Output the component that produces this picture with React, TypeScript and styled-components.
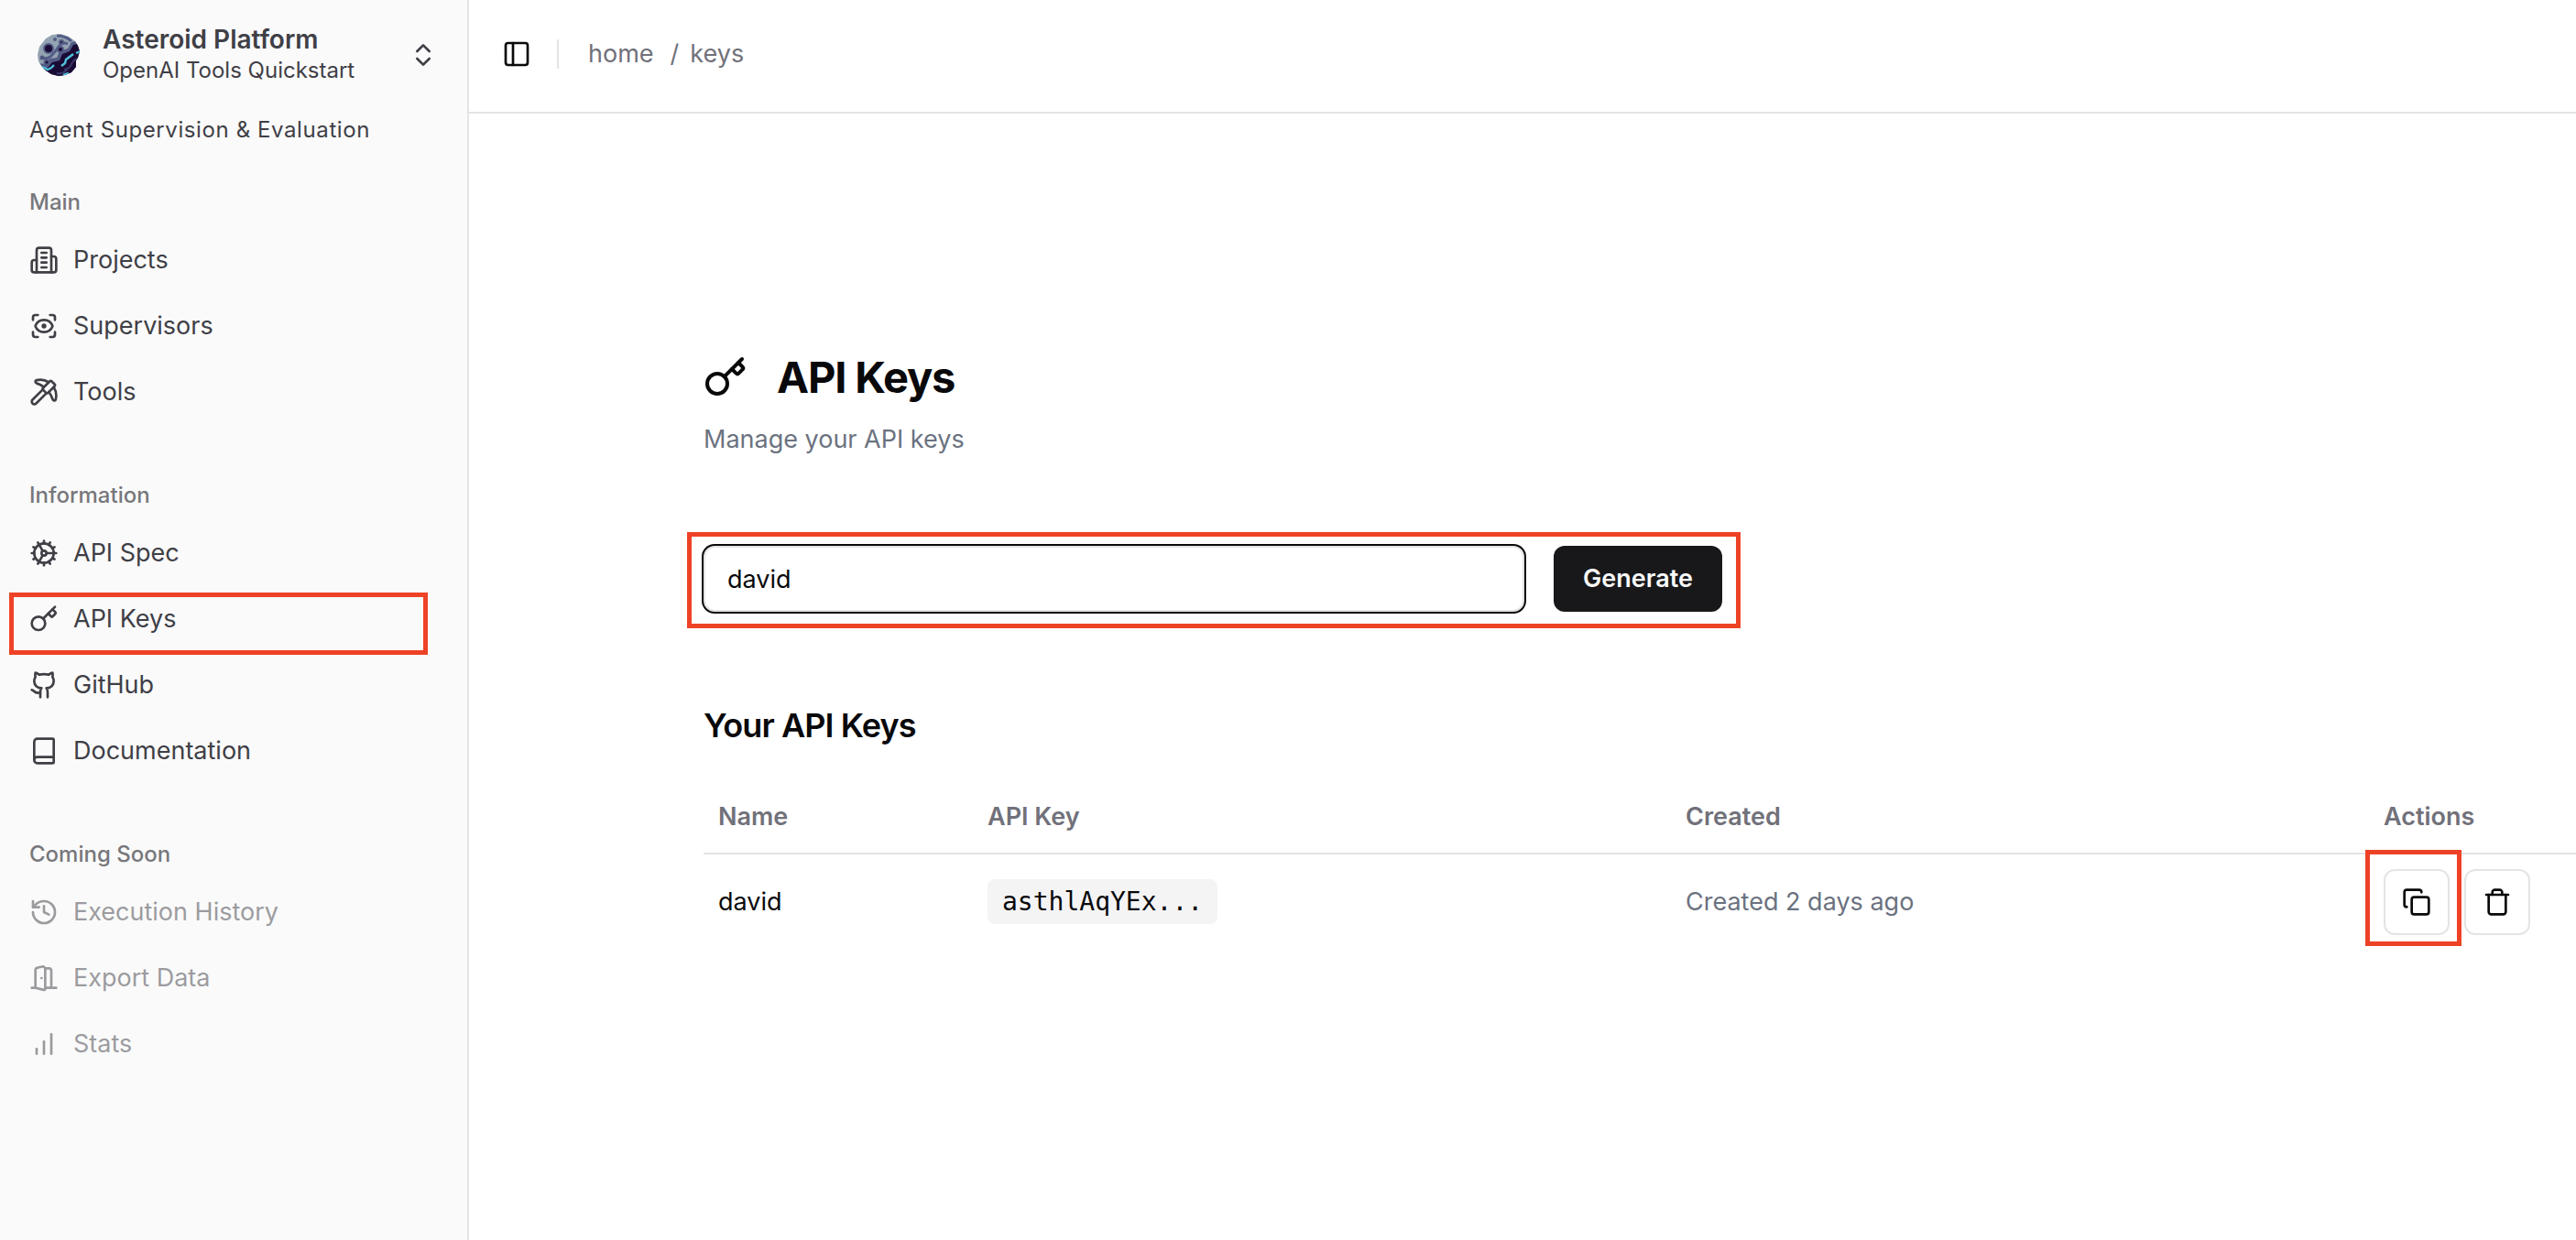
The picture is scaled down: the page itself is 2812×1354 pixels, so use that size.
import React, { useState } from "react";
import styled, { createGlobalStyle, css } from "styled-components";
import {
  Book,
  ChevronsUpDown,
  Cog,
  Copy,
  Github,
  History,
  Key,
  PanelLeft,
  Pickaxe,
  ScanEye,
} from "lucide-react";

const GlobalStyle = createGlobalStyle`
  *, *::before, *::after { box-sizing: border-box; }
  body {
    margin: 0;
    background: #ffffff;
    color: #09090b;
    font-family: Inter, "Liberation Sans", sans-serif;
    font-size: 27px;
    line-height: 40px;
  }
  h1, h2, p, ul { margin: 0; padding: 0; }
  button, input { font: inherit; color: inherit; }
`;

const Shell = styled.div`
  display: flex;
  min-height: 100vh;
  overflow: hidden;
`;

/* Red outline drawn over the control that a reader should look at. */
const highlight = css<{ $inset: string }>`
  position: relative;
  &::after {
    content: "";
    position: absolute;
    inset: ${(p) => p.$inset};
    border: 5px solid #ee4226;
    pointer-events: none;
  }
`;

const Sidebar = styled.aside`
  flex: 0 0 512px;
  display: flex;
  flex-direction: column;
  background: #fafafa;
  border-right: 2px solid #e4e4e7;
  color: #3f3f46;
`;

const SidebarHeader = styled.header`
  padding: 16px 16px 10px;
`;

const TeamButton = styled.button`
  display: flex;
  align-items: center;
  gap: 24px;
  width: 100%;
  height: 88px;
  padding: 0 16px 0 24px;
  border: 0;
  background: none;
  text-align: left;
  svg:last-child { margin-left: auto; }
`;

const TeamText = styled.span`
  display: flex;
  flex-direction: column;
  padding-bottom: 2px;
`;

const TeamName = styled.span`
  font-size: 28px;
  font-weight: 600;
  line-height: 36px;
`;

const TeamProject = styled.span`
  font-size: 24px;
  line-height: 32px;
`;

const Tagline = styled.p`
  padding: 0 16px;
  margin-top: 18px;
  font-size: 24px;
  letter-spacing: 0.025em;
`;

const Group = styled.nav`
  padding: 16px;
  & + & { margin-top: 16px; }
`;

const GroupLabel = styled.h2`
  display: flex;
  align-items: center;
  height: 64px;
  padding: 2px 16px 0;
  font-size: 24px;
  font-weight: 500;
  color: #77777b;
`;

const Menu = styled.ul`
  display: flex;
  flex-direction: column;
  gap: 8px;
  list-style: none;
`;

const MenuItem = styled.li<{ $marked?: boolean; $inset: string }>`
  ${(p) => p.$marked && highlight}
`;

const MenuLink = styled.a<{ $disabled?: boolean }>`
  display: flex;
  align-items: center;
  gap: 16px;
  height: 64px;
  padding: 0 16px;
  color: inherit;
  text-decoration: none;
  opacity: ${(p) => (p.$disabled ? 0.5 : 1)};
`;

const Main = styled.main`
  flex: 1;
  min-width: 0;
`;

const TopBar = styled.header`
  display: flex;
  align-items: center;
  gap: 16px;
  padding: 31px 24px 35px;
  border-bottom: 2px solid #e4e4e7;
`;

const ToggleButton = styled.button`
  display: grid;
  place-items: center;
  width: 56px;
  height: 56px;
  padding: 0;
  border: 0;
  background: none;
`;

const Divider = styled.span`
  width: 2px;
  height: 32px;
  background: #e4e4e7;
`;

const Crumbs = styled.nav`
  display: flex;
  gap: 12px;
  padding-left: 16px;
  color: #71717a;
  a { color: inherit; text-decoration: none; margin-right: 6px; }
`;

const Content = styled.div`
  padding: 256px 0 64px 256px;
`;

const Title = styled.h1`
  display: flex;
  align-items: center;
  gap: 32px;
  font-size: 47px;
  line-height: 64px;
  font-weight: 700;
  letter-spacing: -0.025em;
`;

const Subtitle = styled.p`
  margin-top: 16px;
  color: #6b7280;
`;

const KeyForm = styled.form`
  ${highlight}
  display: flex;
  gap: 32px;
  width: fit-content;
  margin-top: 96px;
`;

const NameInput = styled.input`
  width: 896px;
  height: 72px;
  padding: 0 24px;
  border: 2px solid #e4e4e7;
  border-radius: 12px;
  background: #ffffff;
  outline: none;
  box-shadow: 0 0 0 2px #09090b;
`;

const GenerateButton = styled.button`
  height: 72px;
  padding: 0 32px;
  border: 0;
  border-radius: 12px;
  background: #18181b;
  color: #fafafa;
  font-weight: 600;
`;

const SectionTitle = styled.h2`
  margin: 96px 0 32px;
  font-size: 36px;
  line-height: 56px;
  font-weight: 600;
  letter-spacing: -0.025em;
`;

const KeyTable = styled.table`
  width: 100%;
  table-layout: fixed;
  border-spacing: 0;
  th, td { padding: 0 16px; text-align: left; }
  th {
    height: 81px;
    border-bottom: 2px solid #e4e4e7;
    font-weight: 600;
    color: #71717a;
  }
  td { height: 104px; }
`;

const NameHead = styled.th`
  width: 294px;
`;

const ActionsHead = styled.th`
  width: 226px;
`;

const KeyCode = styled.code`
  padding: 8px 16px;
  border-radius: 8px;
  background: #f4f4f5;
  font-family: "DejaVu Sans Mono", monospace;
  font-size: 28px;
`;

const CreatedCell = styled.td`
  color: #6b7280;
`;

const Actions = styled.div`
  display: flex;
  gap: 16px;
`;

const ActionSlot = styled.span<{ $marked?: boolean; $inset: string }>`
  display: flex;
  ${(p) => p.$marked && highlight}
`;

const IconButton = styled.button`
  display: grid;
  place-items: center;
  width: 72px;
  height: 72px;
  padding: 0;
  border: 2px solid #e4e4e7;
  border-radius: 12px;
  background: #ffffff;
`;

type IconProps = { size?: number };

function Strokes({ size = 32, paths }: IconProps & { paths: string[] }) {
  return (
    <svg
      width={size}
      height={size}
      viewBox="0 0 24 24"
      fill="none"
      stroke="currentColor"
      strokeWidth={2}
      strokeLinecap="round"
      strokeLinejoin="round"
      aria-hidden="true"
    >
      {paths.map((d) => (
        <path key={d} d={d} />
      ))}
    </svg>
  );
}

const BuildingIcon = (p: IconProps) => (
  <Strokes
    {...p}
    paths={[
      "M6 22V4a2 2 0 0 1 2-2h8a2 2 0 0 1 2 2v18Z",
      "M6 12H4a2 2 0 0 0-2 2v6a2 2 0 0 0 2 2h2",
      "M18 9h2a2 2 0 0 1 2 2v9a2 2 0 0 1-2 2h-2",
      "M10 6h4",
      "M10 10h4",
      "M10 14h4",
      "M10 18h4",
    ]}
  />
);

const DoorIcon = (p: IconProps) => (
  <Strokes
    {...p}
    paths={[
      "M13 4h3a2 2 0 0 1 2 2v14",
      "M2 20h3",
      "M13 20h9",
      "M10 12v.01",
      "M13 4.562v16.157a1 1 0 0 1-1.242.97L5 20V5.562a2 2 0 0 1 1.515-1.94l4-1A2 2 0 0 1 13 4.561Z",
    ]}
  />
);

const BarsIcon = (p: IconProps) => (
  <Strokes {...p} paths={["M12 20V10", "M18 20V4", "M6 20v-4"]} />
);

const TrashIcon = (p: IconProps) => (
  <Strokes
    {...p}
    paths={[
      "M3 6h18",
      "M19 6v14c0 1-1 2-2 2H7c-1 0-2-1-2-2V6",
      "M8 6V4c0-1 1-2 2-2h4c1 0 2 1 2 2v2",
    ]}
  />
);

function AsteroidLogo() {
  return (
    <svg width="48" height="48" viewBox="0 0 48 48" aria-hidden="true">
      <defs>
        <clipPath id="rock">
          <path d="M10 6 17 2 26 1 35 4 42 9 45 14 47 20 45 27 43 30 43 37 38 43 31 46 24 47 16 45 10 41 6 37 2 31 1 24 3 15Z" />
        </clipPath>
      </defs>
      <g clipPath="url(#rock)">
        <rect width="48" height="48" fill="#94a3b1" />
        <path d="M48 8 38 10 34 17 25 20 22 27 14 28 10 34 0 33V48H48Z" fill="#535c86" />
        <path d="M48 11 40 13 36 20 28 23 25 30 17 32 12 38 4 39V48H48Z" fill="#1a0b35" />
        <path d="M22 3q10 0 16 6M4 27q8 2 12-2t8-10 10-3" fill="none" stroke="#535c86" strokeWidth="3" />
        <path d="M30 40q6-1 8-6t7-6M22 44q8 1 12-5" fill="none" stroke="#3b3868" strokeWidth="2" />
        <g fill="#1a0b35" stroke="#535c86" strokeWidth="2">
          <circle cx="13" cy="17" r="5" />
          <circle cx="26" cy="18" r="3" />
          <circle cx="27" cy="10" r="2" />
          <circle cx="20" cy="7" r="1" />
          <circle cx="6" cy="27" r="1.5" />
          <circle cx="11" cy="32" r="2.5" />
        </g>
        <path
          d="M27 36 31 33 32 29 36 26 40 23M43 22 48 20M6 37 12 40 16 38 19 35M29 46 35 44"
          fill="none"
          stroke="#4fc3dc"
          strokeWidth="2.4"
          strokeLinejoin="round"
        />
      </g>
    </svg>
  );
}

type Entry = {
  label: string;
  icon: React.ComponentType<IconProps>;
  marked?: boolean;
  disabled?: boolean;
};

const groups: { title: string; entries: Entry[] }[] = [
  {
    title: "Main",
    entries: [
      { label: "Projects", icon: BuildingIcon },
      { label: "Supervisors", icon: ScanEye },
      { label: "Tools", icon: Pickaxe },
    ],
  },
  {
    title: "Information",
    entries: [
      { label: "API Spec", icon: Cog },
      { label: "API Keys", icon: Key, marked: true },
      { label: "GitHub", icon: Github },
      { label: "Documentation", icon: Book },
    ],
  },
  {
    title: "Coming Soon",
    entries: [
      { label: "Execution History", icon: History, disabled: true },
      { label: "Export Data", icon: DoorIcon, disabled: true },
      { label: "Stats", icon: BarsIcon, disabled: true },
    ],
  },
];

export default function App() {
  const [name, setName] = useState("david");

  return (
    <>
      <GlobalStyle />
      <Shell>
        <Sidebar>
          <SidebarHeader>
            <TeamButton type="button">
              <AsteroidLogo />
              <TeamText>
                <TeamName>Asteroid Platform</TeamName>
                <TeamProject>OpenAI Tools Quickstart</TeamProject>
              </TeamText>
              <ChevronsUpDown size={32} />
            </TeamButton>
            <Tagline>Agent Supervision &amp; Evaluation</Tagline>
          </SidebarHeader>
          {groups.map((group) => (
            <Group key={group.title} aria-label={group.title}>
              <GroupLabel>{group.title}</GroupLabel>
              <Menu>
                {group.entries.map(({ label, icon: Icon, marked, disabled }) => (
                  <MenuItem key={label} $marked={marked} $inset="3px 27px -7px -6px">
                    <MenuLink href="#" $disabled={disabled} aria-disabled={disabled}>
                      <Icon size={32} />
                      {label}
                    </MenuLink>
                  </MenuItem>
                ))}
              </Menu>
            </Group>
          ))}
        </Sidebar>

        <Main>
          <TopBar>
            <ToggleButton type="button" aria-label="Toggle sidebar">
              <PanelLeft size={32} />
            </ToggleButton>
            <Divider />
            <Crumbs aria-label="Breadcrumb">
              <a href="#">home</a>
              <span>/</span>
              <span>keys</span>
            </Crumbs>
          </TopBar>

          <Content>
            <Title>
              <Key size={48} />
              API Keys
            </Title>
            <Subtitle>Manage your API keys</Subtitle>

            <KeyForm $inset="-15px -20px -18px -18px" onSubmit={(e) => e.preventDefault()}>
              <NameInput
                aria-label="Key name"
                value={name}
                onChange={(e) => setName(e.target.value)}
              />
              <GenerateButton type="submit">Generate</GenerateButton>
            </KeyForm>

            <SectionTitle>Your API Keys</SectionTitle>
            <KeyTable>
              <thead>
                <tr>
                  <NameHead scope="col">Name</NameHead>
                  <th scope="col">API Key</th>
                  <th scope="col">Created</th>
                  <ActionsHead scope="col">Actions</ActionsHead>
                </tr>
              </thead>
              <tbody>
                <tr>
                  <td>david</td>
                  <td>
                    <KeyCode>asthlAqYEx...</KeyCode>
                  </td>
                  <CreatedCell>Created 2 days ago</CreatedCell>
                  <td>
                    <Actions>
                      <ActionSlot $marked $inset="-21px -13px -12px -20px">
                        <IconButton type="button" aria-label="Copy key">
                          <Copy size={32} />
                        </IconButton>
                      </ActionSlot>
                      <ActionSlot $inset="0">
                        <IconButton type="button" aria-label="Delete key">
                          <TrashIcon />
                        </IconButton>
                      </ActionSlot>
                    </Actions>
                  </td>
                </tr>
              </tbody>
            </KeyTable>
          </Content>
        </Main>
      </Shell>
    </>
  );
}
